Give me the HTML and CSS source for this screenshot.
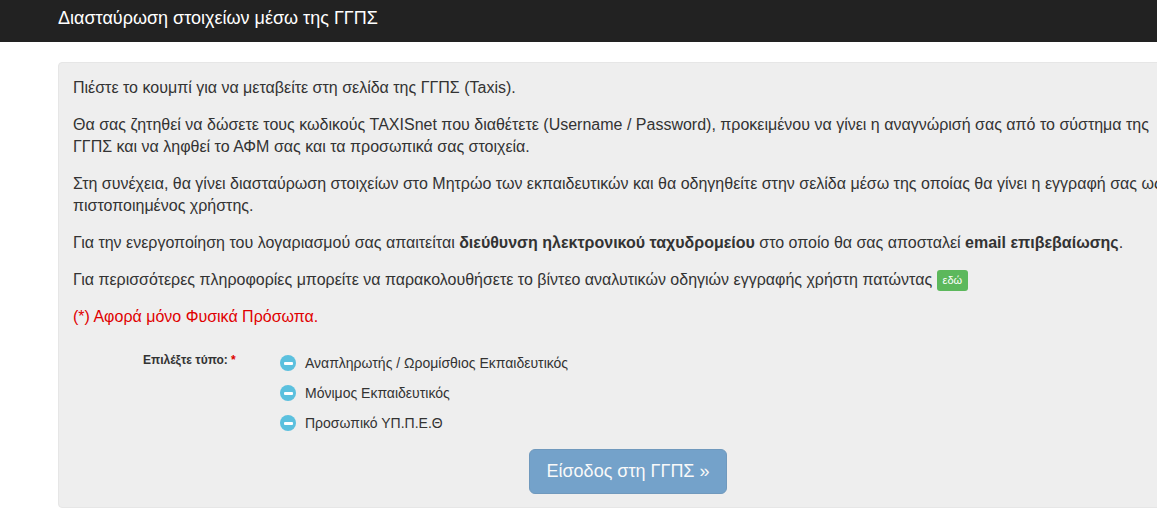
FILE: index.html
```html
<!DOCTYPE html>
<html lang="el">
<head>
    <meta charset="UTF-8">
    <meta name="viewport" content="width=device-width, initial-scale=1.0">
    <title>Διασταύρωση στοιχείων μέσω της ΓΓΠΣ</title>
    <link rel="stylesheet" href="styles.css">
</head>
<body>
    <header class="topbar">
        <h1 class="topbar-title">Διασταύρωση στοιχείων μέσω της ΓΓΠΣ</h1>
    </header>

    <main class="page">
        <form class="well" method="post" action="/taxis">
            <p>Πιέστε το κουμπί για να μεταβείτε στη σελίδα της ΓΓΠΣ (Taxis).</p>
            <p>Θα σας ζητηθεί να δώσετε τους κωδικούς TAXISnet που διαθέτετε (Username / Password), προκειμένου να γίνει η αναγνώρισή σας από το σύστημα της ΓΓΠΣ και να ληφθεί το ΑΦΜ σας και τα προσωπικά σας στοιχεία.</p>
            <p>Στη συνέχεια, θα γίνει διασταύρωση στοιχείων στο Μητρώο των εκπαιδευτικών και θα οδηγηθείτε στην σελίδα μέσω της οποίας θα γίνει η εγγραφή σας ως πιστοποιημένος χρήστης.</p>
            <p>Για την ενεργοποίηση του λογαριασμού σας απαιτείται <b>διεύθυνση ηλεκτρονικού ταχυδρομείου</b> στο οποίο θα σας αποσταλεί <b>email επιβεβαίωσης</b>.</p>
            <p>Για περισσότερες πληροφορίες μπορείτε να παρακολουθήσετε το βίντεο αναλυτικών οδηγιών εγγραφής χρήστη πατώντας <a class="badge" href="#">εδώ</a></p>
            <p class="note">(*) Αφορά μόνο Φυσικά Πρόσωπα.</p>

            <div class="type-group">
                <span class="type-label">Επιλέξτε τύπο:<span class="req">*</span></span>
                <div class="type-options">
                    <label class="radio"><span class="radio-icon"></span>Αναπληρωτής / Ωρομίσθιος Εκπαιδευτικός</label>
                    <label class="radio"><span class="radio-icon"></span>Μόνιμος Εκπαιδευτικός</label>
                    <label class="radio"><span class="radio-icon"></span>Προσωπικό ΥΠ.Π.Ε.Θ</label>
                </div>
            </div>

            <div class="actions">
                <button type="submit" class="btn" disabled>Είσοδος στη ΓΓΠΣ &raquo;</button>
            </div>
        </form>
    </main>
</body>
</html>
```

FILE: styles.css
```css
* {
    box-sizing: border-box;
    margin: 0;
    padding: 0;
}

html, body {
    overflow: hidden;
}

body {
    font-family: "Liberation Sans", Arial, sans-serif;
    font-size: 16px;
    line-height: 22px;
    color: #333;
    background-color: #fff;
}

.topbar {
    background-color: #222;
    height: 42px;
    padding-left: 58px;
    display: flex;
    align-items: center;
}

.topbar-title {
    color: #fff;
    font-size: 18px;
    font-weight: normal;
    line-height: 22px;
    margin-top: -7px;
}

.page {
    padding: 20px 0 0 58px;
}

.well {
    width: 1140px;
    background-color: #eee;
    border: 1px solid #e6e6e6;
    border-radius: 4px;
    padding: 14px 14px 13px;
}

.well p {
    margin-bottom: 15px;
}

.badge {
    display: inline-block;
    background-color: #5cb85c;
    color: #fff;
    font-size: 11px;
    line-height: 21px;
    padding: 0 6px;
    border-radius: 3px;
    text-decoration: none;
    vertical-align: 1px;
}

.note {
    color: #e00000;
}

.type-group {
    display: flex;
    padding-left: 70px;
    margin-top: 24px;
}

.type-label {
    width: 137px;
    font-size: 12px;
    font-weight: bold;
    line-height: 16px;
}

.req {
    color: #d00;
    margin-left: 3px;
}

.type-options {
    display: flex;
    flex-direction: column;
    gap: 8px;
}

.radio {
    display: flex;
    align-items: center;
    font-size: 14px;
}

.radio-icon {
    width: 16px;
    height: 16px;
    border-radius: 50%;
    background-color: #5bc0de;
    margin-right: 9px;
    display: flex;
    align-items: center;
    justify-content: center;
}

.radio-icon::after {
    content: "";
    width: 9px;
    height: 3px;
    background-color: #fff;
    border-radius: 1px;
}

.actions {
    text-align: center;
    margin-top: 15px;
}

.btn {
    font-family: inherit;
    font-size: 18px;
    line-height: 23px;
    padding: 10px 16px;
    white-space: nowrap;
    color: #fff;
    background-color: #337ab7;
    border: 1px solid #2e6da4;
    border-radius: 6px;
    opacity: 0.65;
    cursor: not-allowed;
}
```
